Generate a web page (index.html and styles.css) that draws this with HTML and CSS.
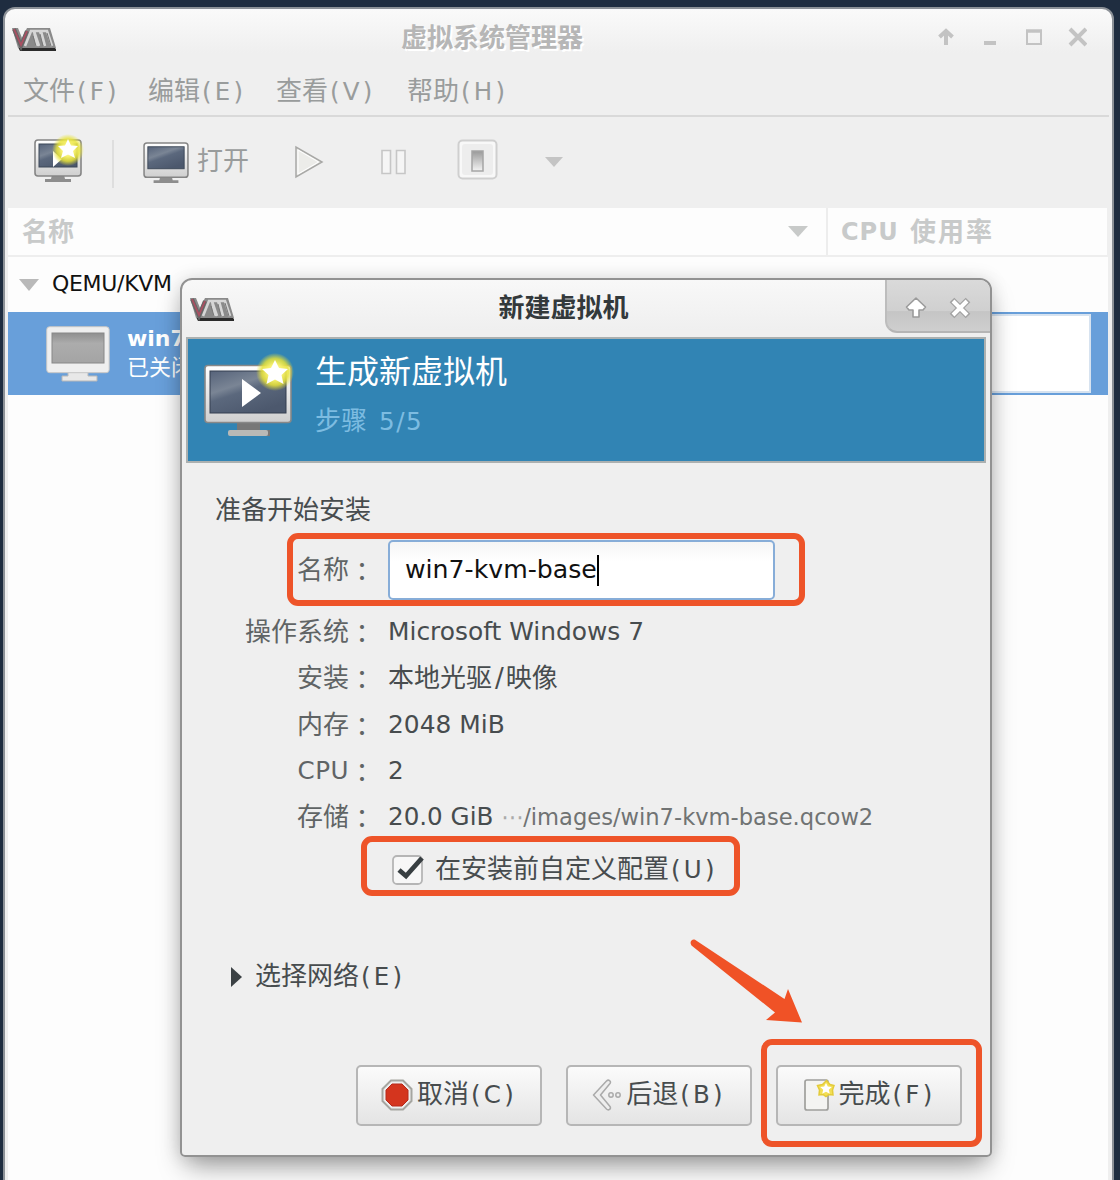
FILE: index.html
```html
<!DOCTYPE html>
<html lang="zh-CN">
<head>
<meta charset="utf-8">
<title>虚拟系统管理器</title>
<link rel="stylesheet" href="styles.css">
</head>
<body>
<svg class="defs" width="0" height="0">
  <defs>
    <linearGradient id="screen" x1="0" y1="0" x2=".6" y2="1">
      <stop offset="0" stop-color="#56637a"/><stop offset=".4" stop-color="#7a8595"/><stop offset=".55" stop-color="#5b687d"/><stop offset="1" stop-color="#4c586d"/>
    </linearGradient>
    <linearGradient id="case" x1="0" y1="0" x2="0" y2="1">
      <stop offset="0" stop-color="#ffffff"/><stop offset="1" stop-color="#cfcfcf"/>
    </linearGradient>
    <linearGradient id="off" x1="0" y1="0" x2="0" y2="1">
      <stop offset="0" stop-color="#8f8f8f"/><stop offset=".35" stop-color="#acacac"/><stop offset="1" stop-color="#a4a4a4"/>
    </linearGradient>
    <linearGradient id="knob" x1="0" y1="0" x2="0" y2="1">
      <stop offset="0" stop-color="#999"/><stop offset="1" stop-color="#f4f4f4"/>
    </linearGradient>
    <radialGradient id="glow">
      <stop offset="0" stop-color="#fffef0"/><stop offset=".4" stop-color="#f6f070"/><stop offset=".7" stop-color="#e8e337" stop-opacity=".85"/><stop offset="1" stop-color="#e8e337" stop-opacity="0"/>
    </radialGradient>
    <symbol id="logo" viewBox="0 0 44 24">
      <path d="M6 20h36l2 2v2H8z" fill="#2a2a2a"/>
      <path d="M0 1h6l4 10 5-10h23l6 20H6z" fill="#8a8a8a"/>
      <path d="M13 19 19 4h3l5 15M25 19 22 4h6l5 15M33 19 29 4h6l5 15" fill="none" stroke="#d6d6d6" stroke-width="2.600"/>
      <path d="M21 9l3 10M28 7l3 12M35 6l4 13" fill="none" stroke="#777" stroke-width="1"/>
      <path d="M2 2l7 17 6-15" fill="none" stroke="#666" stroke-width="4"/>
      <path d="M2 2l7 16 6-14" fill="none" stroke="#ab4f62" stroke-width="1.800"/>
    </symbol>
    <symbol id="monitor" viewBox="0 0 48 44">
      <path d="M18 36h12l1 4h6v3H11v-3h6z" fill="#8d8d8d"/>
      <rect x="1" y="1" width="46" height="36" rx="3" fill="url(#case)" stroke="#858585" stroke-width="1.600"/>
      <rect x="5" y="5" width="38" height="23" fill="url(#screen)" stroke="#3d4858"/>
    </symbol>
  </defs>
</svg>

<main class="manager">
  <header class="titlebar">
    <svg class="logo" width="44" height="24"><use href="#logo"/></svg>
    <h1 class="title title-inactive">虚拟系统管理器</h1>
    <svg class="controls" width="150" height="20" viewBox="0 0 150 20" fill="none" stroke="#c3c3c3">
      <path d="M9 18V5M2.500 10 9 4l6.500 6" stroke-width="4"/>
      <path d="M47 16h12" stroke-width="4"/>
      <path d="M90 4h14v13H90z" stroke-width="2"/><path d="M89 4h16" stroke-width="3.500"/>
      <path d="m133 2 16 16m0-16-16 16" stroke-width="4"/>
    </svg>
  </header>
  <nav class="menubar">
    <span class="menu">文件<b class="key">(F)</b></span>
    <span class="menu">编辑<b class="key">(E)</b></span>
    <span class="menu">查看<b class="key">(V)</b></span>
    <span class="menu">帮助<b class="key">(H)</b></span>
  </nav>
  <div class="toolbar">
    <svg class="tool-new" width="52" height="50" viewBox="0 0 52 50">
      <svg x="1" y="5" width="48" height="44"><use href="#monitor"/></svg>
      <path d="M20 17v16l9-8z" fill="#fff"/>
      <circle cx="35" cy="16" r="16" fill="url(#glow)"/>
      <path d="m35 5 3 6.500 7 .5-5 5 2 7-7-3.500-7 3.500 2-7-5-5 7-.5z" fill="#fff"/>
    </svg>
    <i class="tool-sep"></i>
    <svg class="tool-open" width="46" height="42"><use href="#monitor"/></svg>
    <span class="tool-text">打开</span>
    <svg class="tool-run" width="30" height="34" viewBox="0 0 30 34">
      <path d="M2 2v30l26-15z" fill="#ecece9" stroke="#a8a8a6" stroke-width="1.500"/><path d="M4 5v24l20.500-12z" fill="none" stroke="#fff"/>
    </svg>
    <svg class="tool-pause" width="28" height="26" viewBox="0 0 28 26" fill="#f5f5f5" stroke="#c6c6c6" stroke-width="1.600">
      <path d="M2 1.500h8.500v23H2zM16.500 1.500H25v23h-8.500z"/>
    </svg>
    <svg class="tool-stop" width="42" height="42" viewBox="0 0 42 42">
      <rect x="1.500" y="1.500" width="38" height="38" rx="4" fill="#f8f8f8" stroke="#cfcfcf" stroke-width="2"/>
      <rect x="5" y="5" width="31" height="31" rx="3" fill="#ededed"/>
      <rect x="15" y="12" width="11" height="20" fill="url(#knob)" stroke="#a5a5a5" stroke-width="1.500"/>
    </svg>
    <svg class="tool-more" width="18" height="10"><path d="M0 0h18L9 10z" fill="#c4c4c4"/></svg>
  </div>
  <div class="columns">
    <div class="col-name"><span>名称</span><svg width="20" height="11"><path d="M0 0h20L10 11z" fill="#c8cac9"/></svg></div>
    <div class="col-cpu"><span class="cpu-word">CPU</span><span>使用率</span></div>
  </div>
  <section class="list">
    <div class="connection"><svg width="20" height="12"><path d="M0 0h20L10 12z" fill="#b9b9b9"/></svg><span>QEMU/KVM</span></div>
    <div class="machine">
      <svg width="64" height="56" viewBox="0 0 64 56">
        <path d="M22 46h20v4h9v5H16v-5h6z" fill="#e8e8e8" stroke="#b8b8b8"/>
        <rect x=".7" y=".7" width="62.500" height="46" rx="3" fill="#efefef" stroke="#c5c5c5"/>
        <rect x="6" y="7" width="52" height="30" fill="url(#off)" stroke="#888"/>
      </svg>
      <div class="machine-text"><strong>win7</strong><span>已关闭</span></div>
      <div class="graph"></div>
    </div>
  </section>
</main>

<section class="dialog">
  <header class="dialog-bar">
    <svg class="logo" width="44" height="24"><use href="#logo"/></svg>
    <h2 class="title">新建虚拟机</h2>
    <div class="dialog-controls">
      <svg width="103" height="50" viewBox="0 0 103 50" fill="none">
        <path d="m29 18-9.500 9 2.500 3h4v7h6v-7h4l2.500-3z" fill="#fff" stroke="#9b9b9b" stroke-width="1.600" stroke-linejoin="round"/>
        <path d="m65 20 16 16m0-16-16 16" stroke="#a2a2a2" stroke-width="6.500"/>
        <path d="m66 21 14 14m0-14-14 14" stroke="#fff" stroke-width="4"/>
      </svg>
    </div>
  </header>
  <div class="banner">
    <svg width="90" height="84" viewBox="0 0 90 84">
      <path d="M33 69h23v8h10v6H26v-6h7z" fill="#777"/><rect x="24" y="77" width="40" height="6" rx="2" fill="#b9b9b6"/>
      <rect x="1" y="12.500" width="86" height="57" rx="3" fill="url(#case)" stroke="#888" stroke-width="1.600"/>
      <rect x="6" y="18" width="76" height="42" fill="url(#screen)" stroke="#343f50"/>
      <path d="M38 26v28l19-14z" fill="#fff"/>
      <circle cx="71" cy="19" r="19" fill="url(#glow)"/>
      <path d="m71 7 4 8 9 1-6.500 6 2 9-8.500-4.500-8.500 4.500 2-9-6.500-6 9-1z" fill="#fff"/>
    </svg>
    <div class="banner-text"><span class="banner-title">生成新虚拟机</span><span class="banner-step">步骤<b class="latin fraction">5/5</b></span></div>
  </div>
  <div class="content">
    <p class="ready">准备开始安装</p>
    <div class="form">
      <span class="label name-label">名称<i class="colon" lang="zh-TW">：</i></span><div class="field"><span>win7-kvm-base</span><i class="caret"></i></div>
      <span class="label">操作系统<i class="colon" lang="zh-TW">：</i></span><span class="latin os">Microsoft Windows 7</span>
      <span class="label">安装<i class="colon" lang="zh-TW">：</i></span><span>本地光驱<b class="slash">/</b>映像</span>
      <span class="label">内存<i class="colon" lang="zh-TW">：</i></span><span class="latin os">2048 MiB</span>
      <span class="label"><b class="latin cpu">CPU</b><i class="colon" lang="zh-TW">：</i></span><span class="latin">2</span>
      <span class="label">存储<i class="colon" lang="zh-TW">：</i></span><span class="latin">20.0 GiB <span class="path"><i class="dots">⋯</i>/images/win7-kvm-base.qcow2</span></span>
    </div>
    <div class="custom">
      <svg width="34" height="32" viewBox="0 0 34 32">
        <rect x="1" y="2" width="29" height="28" rx="4" fill="#f7f7f7" stroke="#b5b5b5" stroke-width="1.800"/>
        <path d="m7 16 7 6L30 4" fill="none" stroke="#373e41" stroke-width="4.800"/>
      </svg>
      <span>在安装前自定义配置<b class="key">(U)</b></span>
    </div>
    <div class="network">
      <svg width="12" height="20"><path d="M0 0v20l11-10z" fill="#3b4144"/></svg>
      <span>选择网络<b class="key">(E)</b></span>
    </div>
    <div class="actions">
      <button class="button">
        <svg width="32" height="32" viewBox="0 0 32 32"><path d="M10 1.500h12L30.500 10v12L22 30.500H10L1.500 22V10z" fill="#eee" stroke="#a5a5a0" stroke-width="2"/><path d="M11 5h10l6 6v10l-6 6H11l-6-6V11z" fill="#d4351e" stroke="#b72a1b"/></svg>
        <span>取消<b class="key">(C)</b></span>
      </button>
      <button class="button">
        <svg width="30" height="32" viewBox="0 0 30 32" fill="#eee" stroke="#aaa" stroke-width="1.500"><path d="m1.500 16 13-14c2-2 5 0 3.500 2.500L8.500 16 18 27.500c1.500 2.500-1.500 4.500-3.500 2.500z" stroke-linejoin="round"/><circle cx="19" cy="16" r="2.200"/><circle cx="26" cy="16" r="2.200"/></svg>
        <span>后退<b class="key">(B)</b></span>
      </button>
      <button class="button">
        <svg width="32" height="32" viewBox="0 0 32 32"><rect x="2" y="1" width="23" height="30" rx="2" fill="#f4f4f2" stroke="#9f9f9c" stroke-width="1.700"/><path d="m23.500 1.500 3.500 4 4 1-1.500 4.500.5 5-4-.5-3 2-3-2-4 .5.500-5-2-4.500 5-1z" fill="#f3df55" stroke="#e3cb3a" stroke-width="1.500"/><path d="m23 4 1.800 3.600 4 .4-3 2.800 1 4-3.800-2-3.800 2 1-4-3-2.800 4-.4z" fill="#fff"/></svg>
        <span>完成<b class="key">(F)</b></span>
      </button>
    </div>
  </div>
</section>

<div class="mark mark-name"></div>
<div class="mark mark-custom"></div>
<div class="mark mark-finish"></div>
<svg class="arrow" width="114" height="86" viewBox="0 0 114 86"><path d="M5 .7 94.500 60 98 50l14 33.500-36-2.500 9-7.500L1.500 6.500C-1 3 2-.5 5 .7z" fill="#f05226"/></svg>
</body>
</html>
```
FILE: styles.css
```css
* { box-sizing: border-box; }
body {
  margin: 0;
  width: 1120px;
  height: 1180px;
  position: relative;
  overflow: hidden;
  background: #1f2d40;
  color: #474c4e;
  font: 26px/30px "DejaVu Sans", "Noto Sans CJK SC", sans-serif;
  white-space: nowrap;
}
svg { display: block; flex: none; }
.defs { position: absolute; }
b, i { font-weight: 400; font-style: normal; }
h1, h2, p { margin: 0; }
.key { font-size: 24.5px; letter-spacing: 3.2px; margin-left: 2px; }
.latin { font-size: 24.6px; }

/* Manager window */
.manager {
  position: absolute;
  left: 3px;
  top: 7px;
  width: 1111px;
  height: 1190px;
  padding: 0 3px;
  border: 2px solid #8c9197;
  border-radius: 12px 12px 0 0;
  background: linear-gradient(#fafafa, #efefef 44px);
  display: flex;
  flex-direction: column;
}
.titlebar {
  height: 61px;
  padding: 18px 22px 0 4px;
  display: flex;
  align-items: flex-start;
}
.title {
  flex: 1;
  font-size: 26px;
  line-height: 30px;
  font-weight: 700;
  text-align: center;
  color: #33393b;
}
.title-inactive { margin-top: -4px; padding-left: 63px; padding-right: 72px; color: #b6b6b6; text-shadow: 2px 2px #fff; }
.menubar {
  height: 47px;
  padding: 6px 15px 0;
  border-bottom: 2px solid #d9d9d9;
  display: flex;
  color: #999c9c;
}
.menu { width: 128px; }
.menu:nth-child(1) { width: 125px; }
.menu:nth-child(3) { width: 131px; }
.toolbar { height: 91px; display: flex; padding: 0 25px; align-items: flex-start; color: #999c9c; }
.tool-new { margin-top: 17px; }
.tool-sep { width: 2px; height: 48px; margin: 23px 0 0 27px; background: #dedede; }
.tool-open { margin: 25px 0 0 29px; }
.tool-text { margin: 29px 0 0 8px; }
.tool-run { margin: 28px 0 0 45px; }
.tool-pause { margin: 32px 0 0 56px; }
.tool-stop { margin: 22px 0 0 49px; }
.tool-more { margin: 40px 0 0 46px; }
.columns {
  height: 49px;
  display: flex;
  border-bottom: 2px solid #eee;
  margin-right: 2px;
  background: #fdfdfd;
  color: #c8caca;
  font-weight: 700;
}
.col-name { width: 820px; border-right: 2px solid #ededed; padding: 9px 18px 0 14px; display: flex; justify-content: space-between; }
.col-name svg { margin-top: 9px; }
.col-cpu { padding: 9px 0 0 13px; display: flex; letter-spacing: 2px; }
.cpu-word { width: 69px; font-size: 24px; letter-spacing: 1px; }
.list { flex: 1; background: #fdfdfd; margin-right: 1px; }
.connection { height: 55px; padding: 12px 11px; display: flex; gap: 13px; color: #111; font-size: 22px; letter-spacing: -.3px; }
.connection svg { margin-top: 10px; }
.machine { height: 83px; padding: 14px 0 0 38px; display: flex; background: #689fda; color: #fff; }
.machine-text { width: 703px; padding: 0 17px; display: flex; flex-direction: column; font-size: 22px; line-height: 29px; margin-top: -2px; }
.graph { width: 278px; height: 79px; margin-top: -12px; border: 2px solid #d7e3f0; background: #fff; }

/* New machine dialog */
.dialog {
  position: absolute;
  left: 180px;
  top: 278px;
  width: 812px;
  height: 879px;
  border: 2px solid #929292;
  border-radius: 12px 12px 5px 5px;
  background: linear-gradient(#f8f8f8, #efefef 50px);
  box-shadow: 0 14px 28px -6px rgba(0, 0, 0, .4), 0 0 18px rgba(0, 0, 0, .12);
}
.dialog-bar { height: 57px; padding-left: 8px; display: flex; align-items: flex-start; }
.dialog-bar .logo { margin-top: 17px; }
.dialog-bar .title { margin-top: 13px; padding-left: 8px; }
.dialog-controls {
  width: 105px;
  height: 53px;
  border-left: 2px solid #bdbdbd;
  border-bottom: 2px solid #b5b5b5;
  border-radius: 0 10px 0 12px;
  background: linear-gradient(#dadada, #d0d0d0 60%, #c5c5c5 62%, #cfcfcf);
}
.banner {
  height: 126px;
  margin: 0 4px;
  padding: 14px 16px;
  border: 2px solid #abb0b0;
  background: #3184b4;
  display: flex;
  gap: 21px;
}
.banner-text { display: flex; flex-direction: column; color: #fff; }
.banner-title { font-size: 32px; line-height: 38px; }
.banner-step { margin-top: 15px; color: #7dbce1; line-height: 30px; }
.fraction { margin-left: 12px; letter-spacing: 1.5px; }
.content { padding: 32px 26px 0 33px; }
.form {
  display: grid;
  grid-template-columns: 160px auto;
  grid-template-rows: 69px 45px 47px 47px 46px 45px;
  column-gap: 13px;
  align-items: center;
  justify-content: start;
  margin-top: 15px;
}
.form > * { height: 30px; }
.label { display: flex; justify-content: flex-end; color: #606465; }
.colon { font-family: "Noto Sans CJK TC", sans-serif; height: 30px; }
.cpu { letter-spacing: .5px; }
.form .name-label { align-self: start; margin-top: 15px; }
.form .field {
  align-self: start;
  width: 387px;
  height: 60px;
  padding: 13px 15px;
  border: 2px solid #87add8;
  border-radius: 5px;
  background: linear-gradient(#f5f5f5, #fff 35%);
  color: #111;
  font-size: 25.2px;
  display: flex;
}
.caret { width: 2px; height: 31px; background: #000; }
.os { font-size: 24.9px; }
.slash { margin: 0 2px 0 3px; }
.path { font-size: 22.6px; color: #707373; }
.dots { display: inline-block; width: 22px; color: #aaa; }
.custom { display: flex; gap: 9px; margin: 15px 0 0 177px; }
.network { display: flex; gap: 12px; margin: 75px 0 0 16px; align-items: center; }
.actions { display: flex; justify-content: flex-end; gap: 24px; margin-top: 73px; padding-right: 2px; }
.button {
  width: 186px;
  height: 61px;
  padding: 0 0 2px;
  border: 2px solid #b6b6b6;
  border-radius: 5px;
  background: linear-gradient(#fbfbfb, #e4e4e4);
  color: inherit;
  font: inherit;
  display: flex;
  justify-content: center;
  align-items: center;
  gap: 4px;
}

/* Annotations */
.mark { position: absolute; border: 6px solid #ee5429; border-radius: 11px; }
.mark-name { left: 287px; top: 533px; width: 518px; height: 73px; }
.mark-custom { left: 361px; top: 836px; width: 379px; height: 60px; }
.mark-finish { left: 761px; top: 1039px; width: 221px; height: 108px; }
.arrow { position: absolute; left: 690px; top: 939px; }
```
